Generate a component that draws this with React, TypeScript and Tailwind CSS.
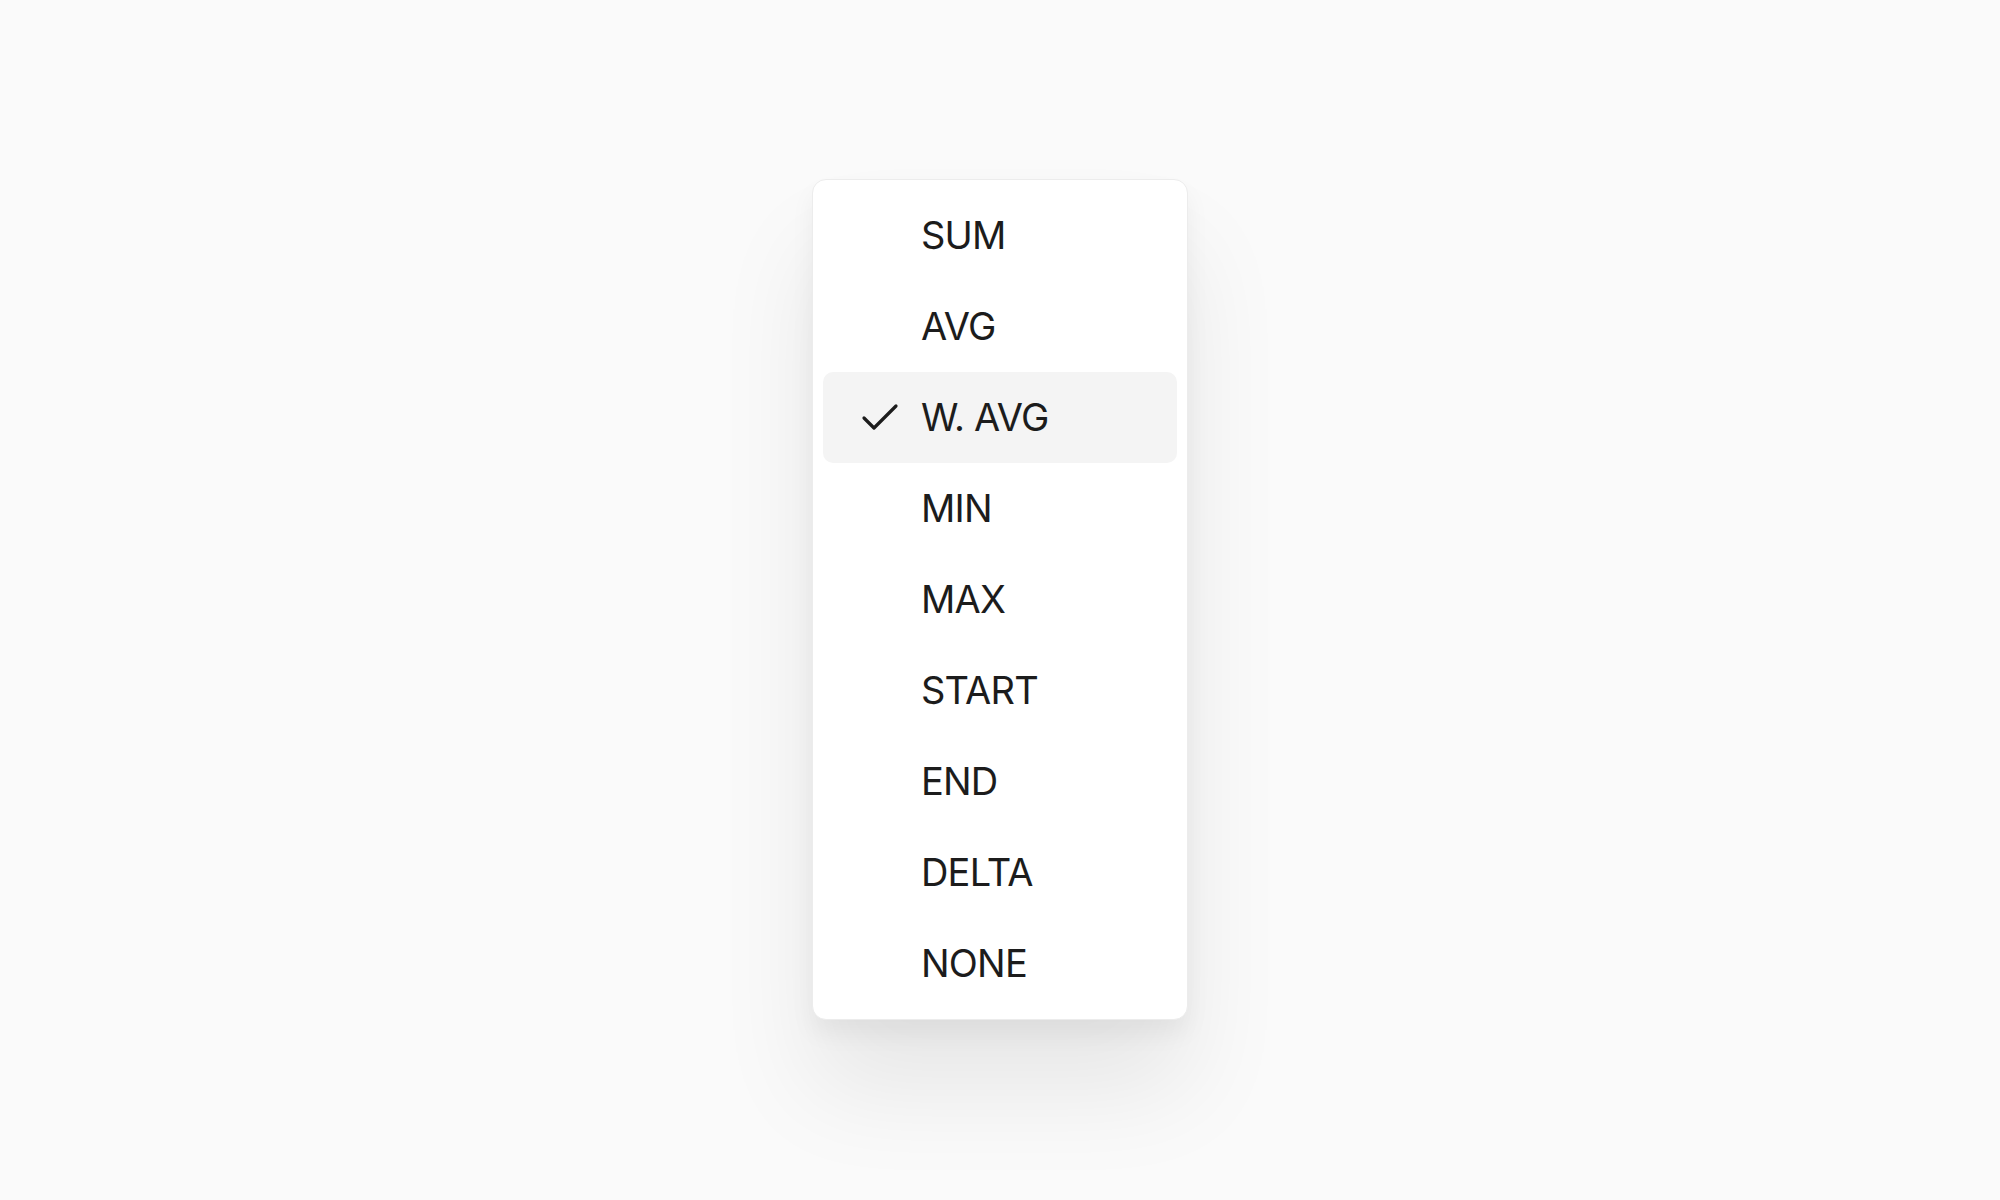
import React from 'react';

const options = ['SUM', 'AVG', 'W. AVG', 'MIN', 'MAX', 'START', 'END', 'DELTA', 'NONE'];

const CheckIcon = () => (
  <svg width="48" height="48" viewBox="0 0 24 24" fill="none" stroke="currentColor" strokeWidth="1.6" strokeLinecap="round" strokeLinejoin="round">
    <path d="M20 6 9 17l-5-5" />
  </svg>
);

export default function App() {
  const selected = 'W. AVG';

  return (
    <div className="w-full h-[1200px] bg-[#fafafa] flex justify-center pt-[179px]" style={{ fontFamily: 'Inter, "Noto Sans", sans-serif' }}>
      <div className="w-[376px] h-fit bg-white rounded-[14px] border border-[#ececec] p-[10px] shadow-[0_70px_100px_rgba(0,0,0,0.08),0_14px_24px_rgba(0,0,0,0.05)]">
        {options.map((opt) => (
          <div
            key={opt}
            className={`h-[91px] flex items-center rounded-[10px] ${opt === selected ? 'bg-[#f4f4f4]' : ''}`}
          >
            <div className="w-[98px] flex justify-end pr-[17px] text-[#1c1c1c]">
              {opt === selected && <CheckIcon />}
            </div>
            <span className="text-[38px] leading-none text-[#1c1c1c] tracking-[-0.8px] pb-[2px]">{opt}</span>
          </div>
        ))}
      </div>
    </div>
  );
}
